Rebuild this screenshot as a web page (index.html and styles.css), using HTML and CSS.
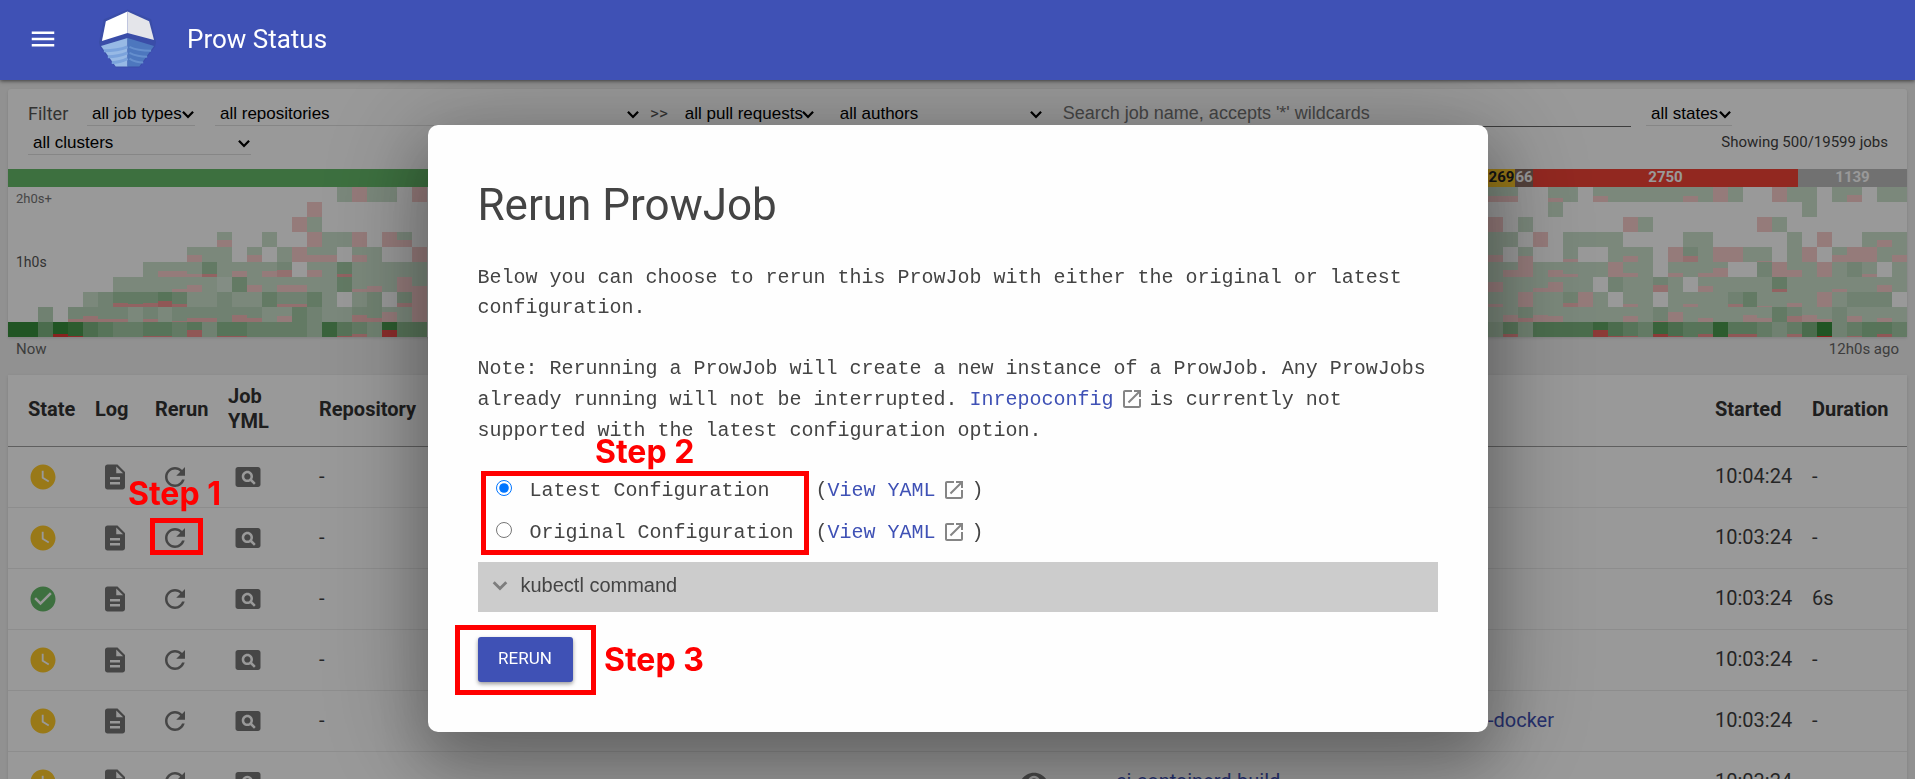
FILE: index.html
```html
<!DOCTYPE html>
<html lang="en">
<head>
<meta charset="utf-8">
<title>Prow Status</title>
<link rel="stylesheet" href="styles.css">
</head>
<body>
<svg class="sprite" aria-hidden="true">
  <symbol id="i-menu" viewBox="0 0 24 24"><path d="M3 18h18v-2H3v2zm0-5h18v-2H3v2zm0-7v2h18V6H3z"/></symbol>
  <symbol id="i-clock" viewBox="0 0 24 24"><path d="M12 2C6.500 2 2 6.500 2 12s4.500 10 10 10 10-4.500 10-10S17.500 2 12 2zm4.200 14.200L11 13V7h1.500v5.200l4.500 2.700-.8 1.300z"/></symbol>
  <symbol id="i-check" viewBox="0 0 24 24"><path d="M12 2C6.480 2 2 6.480 2 12s4.480 10 10 10 10-4.480 10-10S17.520 2 12 2zm-2 15l-5-5 1.410-1.410L10 14.170l7.590-7.590L19 8l-9 9z"/></symbol>
  <symbol id="i-log" viewBox="0 0 24 24"><path d="M14 2H6c-1.100 0-1.990.9-1.990 2L4 20c0 1.100.89 2 1.990 2H18c1.100 0 2-.9 2-2V8l-6-6zm2 16H8v-2h8v2zm0-4H8v-2h8v2zm-3-5V3.500L18.500 9H13z"/></symbol>
  <symbol id="i-rerun" viewBox="0 0 24 24"><path d="M17.650 6.350C16.200 4.900 14.210 4 12 4c-4.420 0-7.990 3.580-7.990 8s3.570 8 7.990 8c3.730 0 6.840-2.550 7.730-6h-2.080c-.82 2.330-3.040 4-5.650 4-3.310 0-6-2.690-6-6s2.690-6 6-6c1.660 0 3.140.69 4.220 1.780L13 11h7V4l-2.350 2.350z"/></symbol>
  <symbol id="i-yml" viewBox="0 0 24 24"><path d="M11.500 9C10.120 9 9 10.120 9 11.500s1.120 2.500 2.500 2.500 2.500-1.120 2.500-2.500S12.880 9 11.500 9zM20 4H4c-1.100 0-2 .9-2 2v12c0 1.100.9 2 2 2h16c1.100 0 2-.9 2-2V6c0-1.100-.9-2-2-2zm-3.210 14.210l-2.910-2.910c-.69.44-1.510.7-2.390.7C9.010 16 7 13.990 7 11.500S9.010 7 11.500 7 16 9.010 16 11.500c0 .88-.26 1.690-.7 2.390l2.910 2.900-1.420 1.420z"/></symbol>
  <symbol id="i-eye" viewBox="0 0 24 24"><path d="M12 4.500C7 4.500 2.730 7.610 1 12c1.730 4.390 6 7.500 11 7.500s9.270-3.110 11-7.500c-1.730-4.390-6-7.500-11-7.500zM12 17c-2.760 0-5-2.240-5-5s2.240-5 5-5 5 2.240 5 5-2.240 5-5 5zm0-8c-1.660 0-3 1.340-3 3s1.340 3 3 3 3-1.340 3-3-1.340-3-3-3z"/></symbol>
  <symbol id="i-open" viewBox="0 0 24 24"><path d="M19 19H5V5h7V3H5c-1.110 0-2 .9-2 2v14c0 1.100.89 2 2 2h14c1.100 0 2-.9 2-2v-7h-2v7zM14 3v2h3.590l-9.830 9.830 1.410 1.410L19 6.410V10h2V3h-7z"/></symbol>
  <symbol id="i-more" viewBox="0 0 24 24"><path d="M5.700 9.200L12 15.500l6.300-6.300" fill="none" stroke="currentColor" stroke-width="2.800"/></symbol>
  <symbol id="i-arrow" viewBox="0 0 12 8"><path d="M1.500 1.500L6 6.200l4.500-4.700" fill="none" stroke="currentColor" stroke-width="2"/></symbol>
</svg>

<header class="header">
  <button class="menu" type="button" aria-label="Menu"><svg class="icon"><use href="#i-menu"/></svg></button>
  <svg class="logo" viewBox="0 0 60 60" aria-hidden="true">
    <path d="M30 0L54 10 59 33 58 38 42 59H18L2 38 1 33 6 10z" fill="#3a4da8"/>
    <path d="M30 2L8 12 4 32 30 24z" fill="#fff"/>
    <path d="M30 2L52 12 57 31 30 24z" fill="#e4e5ea"/>
    <path d="M30 29L3 37 18 58H30z" fill="#97b9e5"/>
    <path d="M30 29L57 37 42 58H30z" fill="#4d77be"/>
    <path d="M6 42Q20 42 30 38M10 48Q20 48 30 44M14 54Q22 54 30 50" fill="none" stroke="#7ba3dc" stroke-width="3"/>
    <path d="M54 42Q40 42 32 38M50 48Q40 48 32 44M46 54Q38 54 32 50" fill="none" stroke="#658fce" stroke-width="2"/>
  </svg>
  <h1 class="brand">Prow Status</h1>
</header>

<main class="page">
  <section class="panel">
    <form class="filters">
      <span class="filters-label">Filter</span>
      <label class="pick w-types"><select aria-label="Job type"><option>all job types</option></select><svg><use href="#i-arrow"/></svg></label>
      <label class="pick w-repos"><select aria-label="Repository"><option>all repositories</option></select><svg><use href="#i-arrow"/></svg></label>
      <span class="sep">&gt;&gt;</span>
      <label class="pick w-pulls"><select aria-label="Pull request"><option>all pull requests</option></select><svg><use href="#i-arrow"/></svg></label>
      <label class="pick w-authors"><select aria-label="Author"><option>all authors</option></select><svg><use href="#i-arrow"/></svg></label>
      <input class="search" type="text" aria-label="Job name" placeholder="Search job name, accepts '*' wildcards">
      <label class="pick w-states"><select aria-label="State"><option>all states</option></select><svg><use href="#i-arrow"/></svg></label>
    </form>
    <div class="filters-second">
      <label class="pick w-clusters"><select aria-label="Cluster"><option>all clusters</option></select><svg><use href="#i-arrow"/></svg></label>
      <span class="count">Showing 500/19599 jobs</span>
    </div>
    <div class="bar">
      <span class="seg success"></span><span class="seg pending">269</span><span class="seg aborted">66</span><span class="seg failure">2750</span><span class="seg other">1139</span>
    </div>
    <div class="histogram">
      <svg id="cells" viewBox="0 0 127 10" preserveAspectRatio="none"></svg>
      <span class="axis axis-top">2h0s+</span>
      <span class="axis axis-mid">1h0s</span>
    </div>
  </section>
  <div class="timeline"><span>Now</span><span>12h0s ago</span></div>

  <table class="jobs">
    <colgroup><col class="c-state"><col class="c-log"><col class="c-rerun"><col class="c-yml"><col class="c-repo"><col class="c-eye"><col><col class="c-start"><col class="c-dur"></colgroup>
    <thead>
      <tr><th>State</th><th>Log</th><th>Rerun</th><th>Job YML</th><th>Repository</th><th></th><th></th><th>Started</th><th>Duration</th></tr>
    </thead>
    <tbody id="rows"></tbody>
  </table>
</main>

<div class="backdrop"></div>

<dialog class="dialog" open aria-labelledby="dialog-title">
  <h2 class="dialog-title" id="dialog-title">Rerun ProwJob</h2>
  <p>Below you can choose to rerun this ProwJob with either the original or latest configuration.</p>
  <p class="note">Note: Rerunning a ProwJob will create a new instance of a ProwJob. Any ProwJobs already running will not be interrupted. <a href="#">Inrepoconfig<svg class="open"><use href="#i-open"/></svg></a> is currently not supported with the latest configuration option.</p>
  <div class="option">
    <input type="radio" name="config" id="latest" checked><label for="latest">Latest Configuration</label>
    <span>(<a href="#">View YAML<svg class="open"><use href="#i-open"/></svg></a> )</span>
  </div>
  <div class="option">
    <input type="radio" name="config" id="original"><label for="original">Original Configuration</label>
    <span>(<a href="#">View YAML<svg class="open"><use href="#i-open"/></svg></a> )</span>
  </div>
  <button class="kubectl" type="button"><svg><use href="#i-more"/></svg>kubectl command</button>
  <button class="rerun" type="button">RERUN</button>
</dialog>

<div class="mark mark-1"></div><strong class="step step-1">Step 1</strong>
<div class="mark mark-2"></div><strong class="step step-2">Step 2</strong>
<div class="mark mark-3"></div><strong class="step step-3">Step 3</strong>

<script src="app.js"></script>
</body>
</html>
```
FILE: styles.css
```css
* { box-sizing: border-box; }

body {
  margin: 0;
  height: 100vh;
  overflow: hidden;
  background: #f2f2f2;
  color: #3f3f3f;
  font-family: Roboto, "Liberation Sans", sans-serif;
  font-size: 20px;
}

.sprite { position: absolute; width: 0; height: 0; }
.icon { display: block; width: 30px; height: 30px; fill: currentColor; }

.header {
  position: relative;
  z-index: 3;
  display: flex;
  align-items: center;
  height: 80px;
  padding: 0 28px 3px;
  background: #3f51b5;
  color: #fff;
  box-shadow: 0 1px 4px rgba(0, 0, 0, .6);
}
.menu { padding: 0; border: 0; background: none; color: #fff; }
.logo { width: 59px; height: 60px; margin: 0 30px 0 40px; }
.brand { margin: 0; font-size: 26px; font-weight: 400; line-height: 30px; }

.page { padding: 9px 8px 0; }
.panel { background: #fff; border-radius: 3px 3px 0 0; box-shadow: 0 1px 3px rgba(0, 0, 0, .12); }

.filters { display: flex; align-items: center; height: 37px; padding: 11px 175px 0 20px; }
.filters-label { width: 59px; font-size: 18px; color: #555; }
.pick { position: relative; display: flex; align-items: center; height: 26px; border-bottom: 1px solid #e0e0e0; }
.pick select {
  width: 100%;
  padding: 2px 5px 0;
  border: 0;
  background: none;
  appearance: none;
  color: #000;
  font: 17px/24px "Liberation Sans", sans-serif;
}
.pick svg { position: absolute; right: 0; top: 10px; width: 14px; height: 9px; color: #000; }
.w-types { width: 108px; margin-right: 20px; }
.w-repos { width: 425px; }
.sep { margin: 0 12px 0 10px; font-size: 17px; color: #555; }
.w-pulls { width: 135px; margin-right: 20px; }
.w-authors { width: 208px; margin-right: 20px; }
.search {
  flex: 1;
  min-width: 0;
  height: 27px;
  padding: 2px 0 0;
  border: 0;
  border-bottom: 1px solid #666;
  background: none;
  font: 18px/24px "Liberation Sans", sans-serif;
}
.search::placeholder { color: #757575; }
.w-states { width: 86px; margin-left: 15px; }
.filters-second { display: flex; align-items: center; justify-content: space-between; height: 43px; padding: 0 19px 11px 20px; }
.w-clusters { width: 223px; }
.count { font-size: 15px; }

.bar { display: flex; height: 18px; font-size: 15px; font-weight: 700; line-height: 16px; text-align: center; color: #fff; }
.success { flex: 1; background: #66bb6a; }
.pending { width: 27px; background: #ffca28; color: #222; }
.aborted { width: 18px; background: #8d6e63; }
.failure { width: 265px; background: #f44336; }
.other { width: 109px; background: #bdbdbd; }

.histogram { position: relative; height: 150px; }
.histogram svg { display: block; width: 100%; height: 100%; shape-rendering: crispEdges; }
.ok { fill: #388e3c; }
.bad { fill: #e53935; }
.axis { position: absolute; left: 8px; font-size: 13px; line-height: 16px; color: #757575; }
.axis-top { top: 4px; }
.axis-mid { top: 67px; font-size: 14px; color: #555; }
.timeline { display: flex; justify-content: space-between; height: 38px; padding: 3px 8px 0; font-size: 15px; line-height: 18px; color: #666; }

.jobs { width: 100%; table-layout: fixed; border-collapse: collapse; background: #fff; box-shadow: 0 1px 3px rgba(0, 0, 0, .12); }
.jobs th, .jobs td { padding: 0; text-align: left; font-size: 20px; line-height: 25px; border-bottom: 1px solid #ececec; }
.jobs th { height: 71px; padding-bottom: 2px; border-bottom: 1px solid #9e9e9e; color: #333; }
.jobs td { height: 61px; }
.jobs th:first-child, .jobs td:first-child { padding-left: 20px; }
.jobs .icon { color: #757575; }
.jobs .pending-icon { color: #ffca28; }
.jobs .success-icon { color: #66bb6a; }
.jobs td .icon { margin-left: 5px; }
.jobs td:first-child .icon { margin-left: 0; }
.jobs a { color: #3f51b5; text-decoration: none; }
.jobs .tail { display: block; width: 438px; text-align: right; }
.c-state { width: 87px; }
.c-log { width: 60px; }
.c-rerun { width: 73px; }
.c-yml { width: 91px; }
.c-repo { width: 695px; }
.c-eye { width: 102px; }
.c-start { width: 97px; }
.c-dur { width: 95px; }
.jobs th:nth-child(4) { padding-right: 40px; }

.backdrop { position: fixed; inset: 0; z-index: 1; background: rgba(0, 0, 0, .4); }

.dialog {
  position: fixed;
  z-index: 2;
  top: 125px;
  width: 1060px;
  margin: 0 auto;
  padding: 50px;
  border: 0;
  border-radius: 10px;
  background: #fefefe;
  color: #444;
  font: 20px/30px "Liberation Mono", monospace;
  box-shadow: 0 12px 110px 16px rgba(0, 0, 0, .2), 0 28px 60px 4px rgba(0, 0, 0, .24);
}
.dialog-title { margin: 0 0 28px; font: 400 44px/60px Roboto, sans-serif; }
.dialog p { margin: 0 0 30px; }
.dialog .note { margin-bottom: 24px; line-height: 31px; }
.dialog a { color: #3f51b5; text-decoration: none; }
.open { width: 24px; height: 24px; margin: 0 -6px 0 6px; vertical-align: -6px; fill: #858585; }
.option { display: flex; align-items: center; height: 42px; padding-left: 18px; }
.option input { width: 16px; height: 16px; margin: 0 18px 6px 0; }
.option label { width: 286px; }
.kubectl {
  display: flex;
  align-items: center;
  width: 100%;
  height: 50px;
  margin: 8px 0 25px;
  padding: 0 10px 4px;
  border: 0;
  background: #ccc;
  color: #444;
  font: 20px "Liberation Sans", sans-serif;
}
.kubectl svg { width: 24px; height: 24px; margin-right: 9px; color: #7d7d7d; }
.rerun {
  display: block;
  width: 95px;
  height: 45px;
  padding: 0 0 4px;
  border: 0;
  border-radius: 3px;
  background: #3f51b5;
  color: #fff;
  font: 17px Roboto, sans-serif;
  box-shadow: 0 2px 4px rgba(0, 0, 0, .4);
}

/* Annotations drawn over the page */
.mark { position: absolute; z-index: 4; border: 5px solid #f00; }
.mark-1 { left: 150px; top: 518px; width: 53px; height: 37px; }
.mark-2 { left: 481px; top: 471px; width: 328px; height: 84px; }
.mark-3 { left: 455px; top: 625px; width: 141px; height: 70px; }
.step { position: absolute; z-index: 4; font: 700 32px/40px Inter, sans-serif; color: #f00; }
.step-1 { left: 128px; top: 474px; }
.step-2 { left: 595px; top: 432px; }
.step-3 { left: 604px; top: 640px; }
```
FILE: app.js
```js
// Each cell is two digits: opacity level (1-9), then share of failures (0-9, 9 = all).
const near = [
  '.. .. .. .. .. .. .. .. .. .. .. .. .. .. .. .. .. .. .. .. .. .. 20 29 20 20 .. 29',
  '.. .. .. .. .. .. .. .. .. .. .. .. .. .. .. .. .. .. .. .. 29 .. .. .. .. .. .. ..',
  '.. .. .. .. .. .. .. .. .. .. .. .. .. .. .. .. .. .. .. 29 20 .. .. .. .. .. .. ..',
  '.. .. .. .. .. .. .. .. .. .. .. .. .. .. 25 .. .. 20 .. .. 29 20 20 29 .. 29 25 ..',
  '.. .. .. .. .. .. .. .. .. .. .. .. 25 20 20 .. 25 .. 20 29 25 25 .. 25 20 .. .. 29',
  '.. .. .. .. .. .. .. .. .. 20 24 24 22 42 20 24 20 24 35 .. 25 20 42 20 20 20 20 20',
  '.. .. .. .. .. .. .. 20 20 20 20 22 25 20 10 40 25 20 25 25 20 20 40 22 24 20 29 24',
  '.. .. .. .. .. 20 30 43 42 43 54 42 20 20 30 20 20 40 32 32 40 20 .. 20 30 .. 33 29',
  '.. .. 30 .. 32 34 32 32 20 32 20 31 33 33 30 35 33 20 24 40 30 20 20 35 33 27 20 29',
  '90 90 60 92 81 60 50 40 40 51 51 40 55 30 51 51 40 40 40 40 30 70 51 42 30 85 50 50'
];
const far = [
  '24 24 .. .. 23 20 .. 24 20 20 20 20 20 24 20 29 20 .. .. 29 20 20 .. 20 25 .. 20 20',
  '.. .. .. .. 20 .. .. .. .. .. .. .. .. .. .. .. .. .. .. .. .. 20 .. .. .. .. .. ..',
  '29 .. 20 .. .. .. .. .. .. 29 20 .. .. .. .. .. .. .. 29 20 .. .. .. .. .. .. .. ..',
  '20 20 .. 29 .. 20 20 20 20 .. .. .. .. 20 20 .. .. .. .. .. 20 .. 29 .. .. 20 25 20',
  '25 .. 24 .. .. 22 .. .. 20 24 20 .. 29 34 20 29 29 20 21 .. 20 29 .. 25 29 29 20 25',
  '20 25 29 20 25 22 20 20 29 23 20 .. 23 20 23 26 .. .. 30 29 25 20 29 20 30 22 .. 20',
  '27 20 20 23 27 20 20 .. 30 20 20 35 20 .. 24 20 20 20 20 42 20 20 20 22 20 20 25 20',
  '22 20 29 20 20 33 29 20 .. 22 20 .. 20 22 20 20 32 40 21 20 23 20 29 20 30 30 30 ..',
  '20 25 33 25 24 20 20 20 20 24 20 31 27 20 23 20 20 25 23 40 34 25 22 30 24 20 23 20',
  '30 52 30 60 60 60 60 75 61 51 40 72 61 50 52 80 52 52 40 30 42 60 91 30 41 50 52 40'
];

const opacity = [0, .18, .25, .34, .45, .55, .65, .8, .9, 1];
let shapes = '';
function draw(list, start) {
  list.forEach((row, y) => {
    row.split(' ').forEach((cell, i) => {
      if (cell === '..') return;
      const alpha = opacity[cell[0]];
      const share = cell[1] === '9' ? 1 : cell[1] / 10;
      if (share < 1) shapes += `<rect class="ok" x="${start + i}" y="${y}" width="1" height="${1 - share}" opacity="${alpha}"/>`;
      if (share > 0) shapes += `<rect class="bad" x="${start + i}" y="${y + 1 - share}" width="1" height="${share}" opacity="${alpha}"/>`;
    });
  });
}
draw(near, 0);
draw(far, 99);
document.getElementById('cells').innerHTML = shapes;

const icon = (name, cls = '') => `<svg class="icon ${cls}"><use href="#i-${name}"/></svg>`;
const jobs = [
  ['clock', '', '', '10:04:24', '-'],
  ['clock', '', '', '10:03:24', '-'],
  ['check', '', '', '10:03:24', '6s'],
  ['clock', '', '', '10:03:24', '-'],
  ['clock', '', '<a class="tail" href="#">-docker</a>', '10:03:24', '-'],
  ['clock', icon('eye'), '<a href="#">ci-containerd-build</a>', '10:03:24', '-']
];
document.getElementById('rows').innerHTML = jobs.map(([state, eye, job, started, duration]) =>
  `<tr><td>${icon(state, state === 'check' ? 'success-icon' : 'pending-icon')}</td>` +
  `<td>${icon('log')}</td><td>${icon('rerun')}</td><td>${icon('yml')}</td><td>-</td>` +
  `<td>${eye}</td><td>${job}</td><td>${started}</td><td>${duration}</td></tr>`).join('');
```
